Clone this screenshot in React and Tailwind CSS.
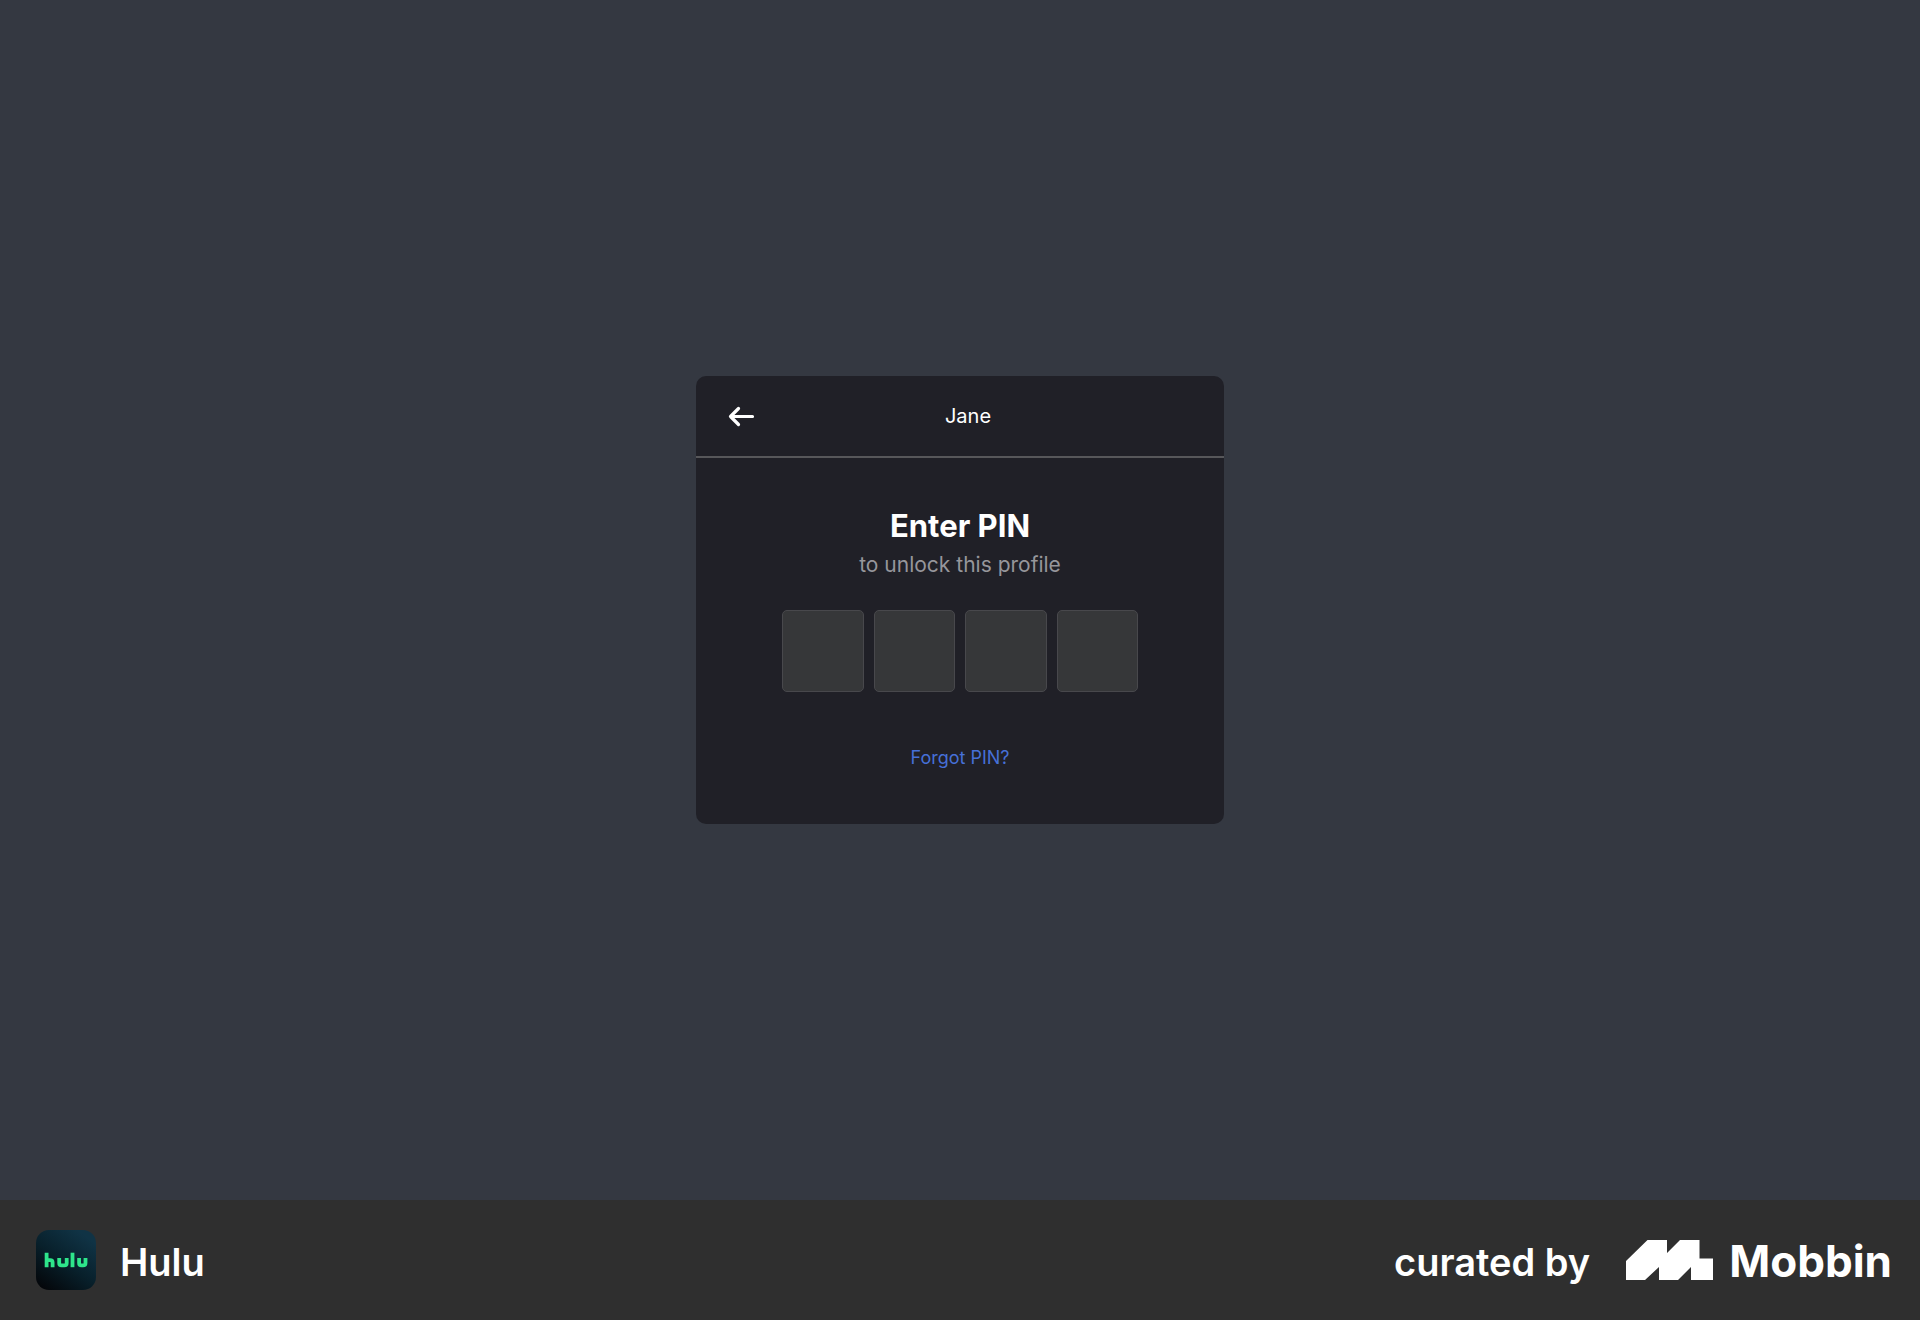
function HuluIcon() {
  return (
    <svg viewBox="0 0 60 60" className="size-15" role="img" aria-label="Hulu app icon">
      <defs>
        <linearGradient id="tile" x1="0.1" y1="0.95" x2="0.75" y2="0.05">
          <stop offset="0" stopColor="#04070b" />
          <stop offset="0.5" stopColor="#08202b" />
          <stop offset="1" stopColor="#103345" />
        </linearGradient>
      </defs>
      <rect width="60" height="60" rx="13" fill="url(#tile)" />
      <g fill="none" stroke="#2ee58b" strokeWidth="3.8">
        <path d="M10.6 22.7v14.5M10.6 30.2h3.6q2.4 0 2.4 2.4v4.6" />
        <path d="M23.2 28v5q0 2.4 2.4 2.4h2.7q2.4 0 2.4-2.4v-5" />
        <path d="M36.5 22.7v14.5" />
        <path d="M43.1 28v5q0 2.400 2.400 2.400h1.600q2.400 0 2.400-2.400v-5" />
      </g>
    </svg>
  );
}

function MobbinMark() {
  return (
    <svg viewBox="0 0 87 40" className="h-10 w-[87px]" fill="#fff" aria-hidden="true">
      <path d="M0 21 21.5 0H41V13L54 0H73.500V18.500H87V40H65V27L52 40H33V27L19 40H0Z" />
    </svg>
  );
}

function BackArrow() {
  return (
    <svg viewBox="0 0 28 22" className="h-[22px] w-7" fill="none" stroke="#fff" strokeWidth="3.2" strokeLinecap="round" strokeLinejoin="round" aria-hidden="true">
      <path d="M10.500 3.500 2.500 11.500l8 8M2.500 11.500h22" />
    </svg>
  );
}

export default function App() {
  return (
    <div className="flex min-h-screen flex-col bg-[#343841] font-['Inter','Liberation_Sans',sans-serif] text-white">
      <main className="flex flex-1 items-center justify-center">
        <section className="w-full max-w-[528px] overflow-hidden rounded-[10px] bg-[#202027]">
          <header className="flex items-center border-b-2 border-[#57575a] py-6 pr-11 pl-8">
            <button type="button" aria-label="Back" className="flex h-8 items-center">
              <BackArrow />
            </button>
            <h2 className="flex-1 text-center text-xl leading-8">Jane</h2>
          </header>
          <form className="flex flex-col items-center py-12">
            <h1 className="text-[31px] leading-10 font-bold">Enter PIN</h1>
            <p className="text-[21px] leading-[38px] text-[#96969b]">to unlock this profile</p>
            <div className="mt-[26px] grid w-[356px] grid-cols-4 gap-[10px]">
              {[1, 2, 3, 4].map((n) => (
                <input
                  key={n}
                  type="password"
                  inputMode="numeric"
                  maxLength={1}
                  aria-label={`PIN digit ${n}`}
                  className="aspect-square w-full rounded-[5px] border border-[#48484c] bg-[#363739] text-center text-3xl"
                />
              ))}
            </div>
            <a href="#forgot" className="mt-12 text-lg leading-9 text-[#4670d8]">Forgot PIN?</a>
          </form>
        </section>
      </main>
      <footer className="flex h-30 items-center justify-between bg-[#2f2f2f] pr-7 pl-9">
        <div className="flex items-center gap-6">
          <HuluIcon />
          <span className="pt-1 text-[38px] leading-15 font-semibold">Hulu</span>
        </div>
        <div className="flex items-center">
          <span className="pt-1 text-[38px] leading-15 font-semibold">curated by</span>
          <div className="ml-9 flex items-center gap-4">
            <MobbinMark />
            <span className="pt-0.5 text-[44px] leading-15 font-bold">Mobbin</span>
          </div>
        </div>
      </footer>
    </div>
  );
}
